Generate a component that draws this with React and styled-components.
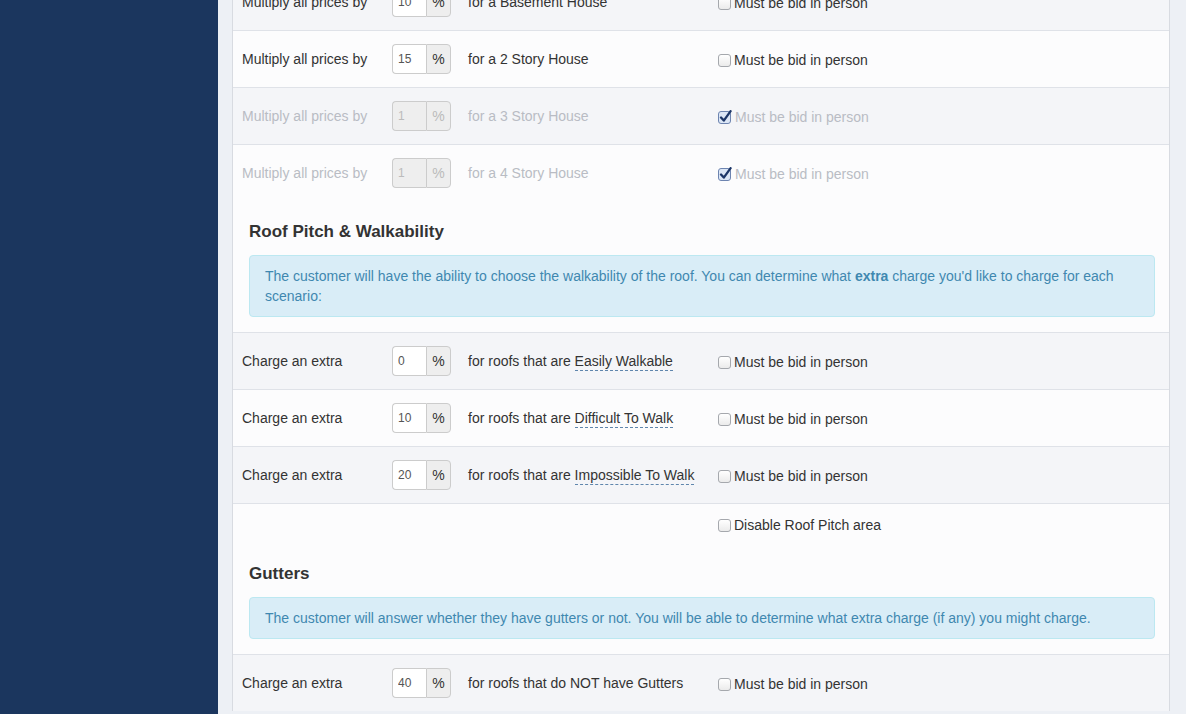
import React from "react";
import styled, { createGlobalStyle } from "styled-components";

const GlobalStyle = createGlobalStyle`
  * {
    box-sizing: border-box;
  }
  body {
    margin: 0;
    overflow: hidden;
    font-family: "Liberation Sans", Arial, Helvetica, sans-serif;
    font-size: 14px;
    color: #333;
  }
`;

const Layout = styled.div`
  display: flex;
  height: 100vh;
`;

const Sidebar = styled.aside`
  width: 218px;
  flex-shrink: 0;
  background-color: #1b365e;
`;

const Main = styled.main`
  flex: 1;
  padding: 0 16px 0 14px;
  background-color: #edf0f5;
  overflow: hidden;
`;

const Panel = styled.div`
  margin-top: -27px;
  background-color: #fcfcfd;
  border-left: 1px solid #d8dbe1;
  border-right: 1px solid #d8dbe1;
`;

const Row = styled.div`
  display: grid;
  grid-template-columns: 150px 76px 250px 1fr;
  align-items: center;
  height: 57px;
  padding-left: 9px;
  border-top: 1px solid #dfe2e8;
  background-color: ${(p) => (p.$shaded ? "#f4f5f8" : "#fcfcfd")};
  color: ${(p) => (p.$disabled ? "#b9bcc4" : "#333")};
`;

const OptionRow = styled(Row)`
  height: auto;
  padding-top: 9px;
  padding-bottom: 8px;
  line-height: 20px;
`;

const InputGroup = styled.div`
  display: flex;
  height: 30px;
`;

const NumberInput = styled.input`
  width: 34px;
  height: 30px;
  margin: 0;
  padding: 0 5px;
  border: 1px solid #ccc;
  border-right: none;
  border-radius: 4px 0 0 4px;
  font-family: "Liberation Sans", Arial, sans-serif;
  font-size: 12px;
  color: ${(p) => (p.disabled ? "#bbb" : "#555")};
  background-color: ${(p) => (p.disabled ? "#eee" : "#fff")};
  outline: none;
`;

const Addon = styled.span`
  display: flex;
  align-items: center;
  justify-content: center;
  width: 25px;
  border: 1px solid #ccc;
  border-radius: 0 4px 4px 0;
  background-color: #eee;
  color: ${(p) => (p.$disabled ? "#bbb" : "#333")};
`;

const Term = styled.span`
  border-bottom: 1px dashed #5f86ad;
  padding-bottom: 1px;
`;

const CheckLabel = styled.label`
  grid-column: 4;
  display: flex;
  align-items: center;
  gap: 3px;
  padding-top: 2px;
`;

const Box = styled.span`
  display: inline-block;
  width: 13px;
  height: 13px;
  border: 1px solid #a5a8ad;
  border-radius: 3px;
  background: linear-gradient(#ffffff, #ebebeb);
`;

const Heading = styled.h4`
  margin: 0 0 12px;
  padding: 20px 0 0 16px;
  font-size: 17px;
  line-height: 22px;
  font-weight: bold;
  color: #333;
`;

const Alert = styled.div`
  margin: 0 14px 15px 16px;
  padding: 10px 15px;
  line-height: 20px;
  border: 1px solid #bce8f1;
  border-radius: 4px;
  background-color: #d9edf7;
  color: #3f88b0;
`;

const Checkbox = ({ checked }) =>
  checked ? (
    <svg width="14" height="14" viewBox="0 0 14 14">
      <rect x="0.5" y="1.5" width="12" height="12" rx="2.5" fill="#dbe6f6" stroke="#6d84b0" />
      <path d="M3 7.5 L5.8 10.6 L12.6 1.2" fill="none" stroke="#1c3668" strokeWidth="2.3" strokeLinecap="round" strokeLinejoin="round" />
    </svg>
  ) : (
    <Box />
  );

const PriceRow = ({ label, value, children, checked, disabled, shaded }) => (
  <Row $shaded={shaded} $disabled={disabled}>
    <span>{label}</span>
    <InputGroup>
      <NumberInput type="text" defaultValue={value} disabled={disabled} />
      <Addon $disabled={disabled}>%</Addon>
    </InputGroup>
    <span>{children}</span>
    <CheckLabel>
      <Checkbox checked={checked} />
      Must be bid in person
    </CheckLabel>
  </Row>
);

const houses = [
  { value: "10", text: "for a Basement House" },
  { value: "15", text: "for a 2 Story House" },
  { value: "1", text: "for a 3 Story House", disabled: true, checked: true },
  { value: "1", text: "for a 4 Story House", disabled: true, checked: true },
];

const roofs = [
  { value: "0", term: "Easily Walkable" },
  { value: "10", term: "Difficult To Walk" },
  { value: "20", term: "Impossible To Walk" },
];

export default function App() {
  return (
    <>
      <GlobalStyle />
      <Layout>
        <Sidebar />
        <Main>
          <Panel>
            {houses.map((h, i) => (
              <PriceRow
                key={h.text}
                label="Multiply all prices by"
                value={h.value}
                disabled={h.disabled}
                checked={h.checked}
                shaded={i % 2 === 0}
              >
                {h.text}
              </PriceRow>
            ))}

            <Heading>Roof Pitch &amp; Walkability</Heading>
            <Alert>
              The customer will have the ability to choose the walkability of the roof. You can
              determine what <strong>extra</strong> charge you'd like to charge for each scenario:
            </Alert>
            {roofs.map((r, i) => (
              <PriceRow key={r.term} label="Charge an extra" value={r.value} shaded={i % 2 === 0}>
                for roofs that are <Term>{r.term}</Term>
              </PriceRow>
            ))}
            <OptionRow>
              <CheckLabel>
                <Checkbox />
                Disable Roof Pitch area
              </CheckLabel>
            </OptionRow>

            <Heading>Gutters</Heading>
            <Alert>
              The customer will answer whether they have gutters or not. You will be able to
              determine what extra charge (if any) you might charge.
            </Alert>
            <PriceRow label="Charge an extra" value="40" shaded>
              for roofs that do NOT have Gutters
            </PriceRow>
          </Panel>
        </Main>
      </Layout>
    </>
  );
}
